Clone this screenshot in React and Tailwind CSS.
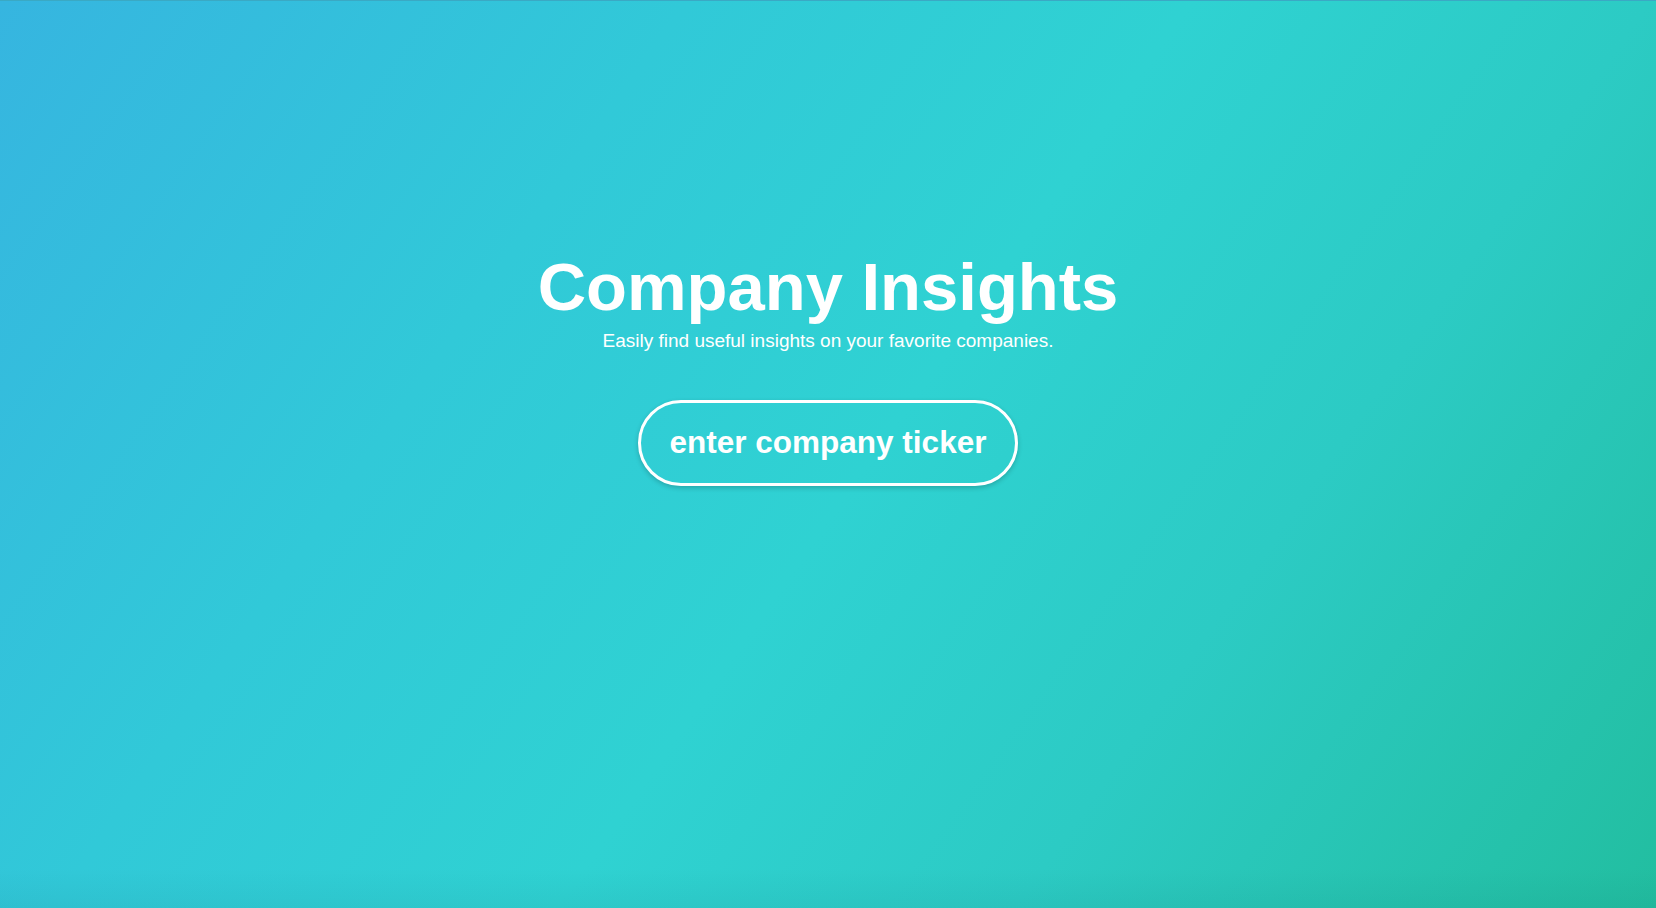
import React, { useState } from "react";

export default function App() {
  const [ticker, setTicker] = useState("");
  const [editing, setEditing] = useState(false);

  return (
    <div
      className="relative flex min-h-screen w-full flex-col items-center border-t border-[#3aa9c4] bg-[linear-gradient(125deg,#36b5e0_0%,#31c9d8_30%,#2fd2d2_52%,#2ccbc4_72%,#22bea0_100%)] text-white"
      style={{ fontFamily: '"Liberation Sans", Arial, Helvetica, sans-serif' }}
    >
      <div className="flex flex-col items-center pt-[252px]">
        <h1 className="text-[67px] font-bold leading-none">Company Insights</h1>
        <p className="mt-[11px] text-[19px] leading-none">Easily find useful insights on your favorite companies.</p>

        {editing ? (
          <input
            autoFocus
            value={ticker}
            onChange={e => setTicker(e.target.value.toUpperCase())}
            onBlur={() => !ticker && setEditing(false)}
            placeholder="enter company ticker"
            className="mt-[50px] w-[381px] rounded-full border-[3px] border-white bg-transparent px-[29px] py-[24px] text-center text-[31.5px] font-bold leading-none text-white shadow-[0_2px_5px_rgba(0,0,0,0.2)] outline-none placeholder:text-white"
          />
        ) : (
          <button
            onClick={() => setEditing(true)}
            className="mt-[50px] rounded-full border-[3px] border-white px-[29px] py-[24px] text-[31.5px] font-bold leading-none shadow-[0_2px_5px_rgba(0,0,0,0.2)]"
          >
            enter company ticker
          </button>
        )}
      </div>

      <div className="absolute bottom-0 left-0 h-[40px] w-full bg-gradient-to-b from-transparent to-[rgba(0,60,70,0.06)]" />
    </div>
  );
}
